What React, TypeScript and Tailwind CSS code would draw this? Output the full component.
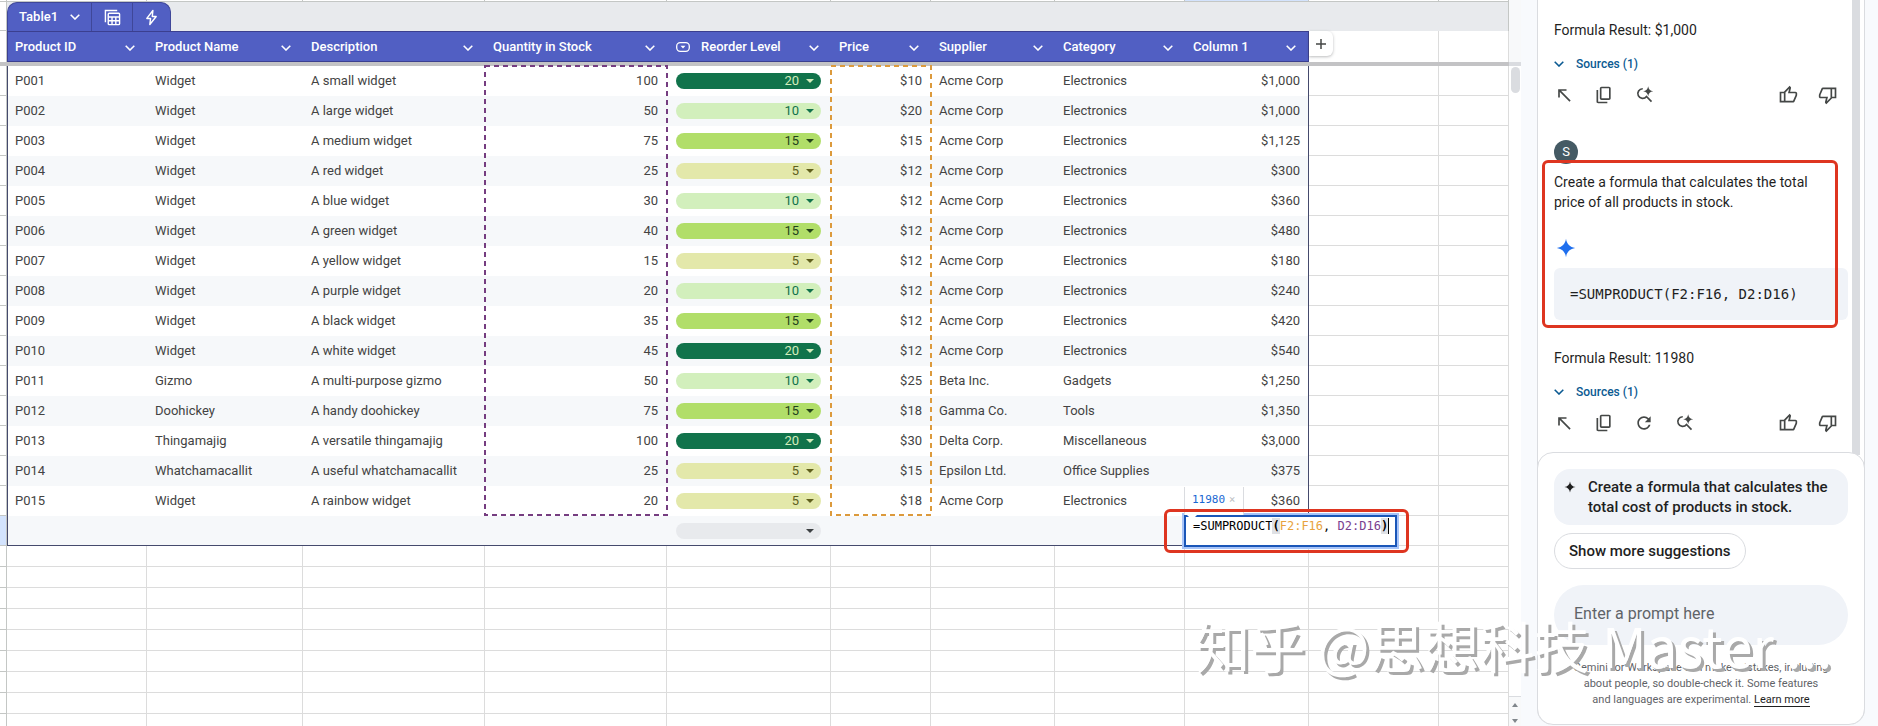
import type { ReactNode } from "react";
import clsx from "clsx";

type Row = {
  id: string;
  name: string;
  description: string;
  quantity: string;
  reorder: string;
  price: string;
  supplier: string;
  category: string;
  total: string;
};

const ROWS: Row[] = [
  { id: "P001", name: "Widget", description: "A small widget", quantity: "100", reorder: "20", price: "$10", supplier: "Acme Corp", category: "Electronics", total: "$1,000" },
  { id: "P002", name: "Widget", description: "A large widget", quantity: "50", reorder: "10", price: "$20", supplier: "Acme Corp", category: "Electronics", total: "$1,000" },
  { id: "P003", name: "Widget", description: "A medium widget", quantity: "75", reorder: "15", price: "$15", supplier: "Acme Corp", category: "Electronics", total: "$1,125" },
  { id: "P004", name: "Widget", description: "A red widget", quantity: "25", reorder: "5", price: "$12", supplier: "Acme Corp", category: "Electronics", total: "$300" },
  { id: "P005", name: "Widget", description: "A blue widget", quantity: "30", reorder: "10", price: "$12", supplier: "Acme Corp", category: "Electronics", total: "$360" },
  { id: "P006", name: "Widget", description: "A green widget", quantity: "40", reorder: "15", price: "$12", supplier: "Acme Corp", category: "Electronics", total: "$480" },
  { id: "P007", name: "Widget", description: "A yellow widget", quantity: "15", reorder: "5", price: "$12", supplier: "Acme Corp", category: "Electronics", total: "$180" },
  { id: "P008", name: "Widget", description: "A purple widget", quantity: "20", reorder: "10", price: "$12", supplier: "Acme Corp", category: "Electronics", total: "$240" },
  { id: "P009", name: "Widget", description: "A black widget", quantity: "35", reorder: "15", price: "$12", supplier: "Acme Corp", category: "Electronics", total: "$420" },
  { id: "P010", name: "Widget", description: "A white widget", quantity: "45", reorder: "20", price: "$12", supplier: "Acme Corp", category: "Electronics", total: "$540" },
  { id: "P011", name: "Gizmo", description: "A multi-purpose gizmo", quantity: "50", reorder: "10", price: "$25", supplier: "Beta Inc.", category: "Gadgets", total: "$1,250" },
  { id: "P012", name: "Doohickey", description: "A handy doohickey", quantity: "75", reorder: "15", price: "$18", supplier: "Gamma Co.", category: "Tools", total: "$1,350" },
  { id: "P013", name: "Thingamajig", description: "A versatile thingamajig", quantity: "100", reorder: "20", price: "$30", supplier: "Delta Corp.", category: "Miscellaneous", total: "$3,000" },
  { id: "P014", name: "Whatchamacallit", description: "A useful whatchamacallit", quantity: "25", reorder: "5", price: "$15", supplier: "Epsilon Ltd.", category: "Office Supplies", total: "$375" },
  { id: "P015", name: "Widget", description: "A rainbow widget", quantity: "20", reorder: "5", price: "$18", supplier: "Acme Corp", category: "Electronics", total: "$360" },
];

const COLUMNS = [
  "Product ID",
  "Product Name",
  "Description",
  "Quantity in Stock",
  "Reorder Level",
  "Price",
  "Supplier",
  "Category",
  "Column 1",
];

const EMPTY_ROWS = Array.from({ length: 12 }, (_, i) => i);
const GRID_COLUMNS = Array.from({ length: 11 }, (_, i) => i);

const MONO = "font-['DejaVu_Sans_Mono','Liberation_Mono',monospace]";

function chipColor(level: string) {
  if (level === "20") return "bg-[#11734b] text-[#d4edbc]";
  if (level === "15") return "bg-[#b1de69] text-[#23421a]";
  if (level === "10") return "bg-[#d2efbc] text-[#11734b]";
  if (level === "5") return "bg-[#e3e8aa] text-[#5f5f1c]";
  return "bg-[#e8eaed] text-[#3c4043]";
}

function Chevron() {
  return (
    <svg viewBox="0 0 10 6" className="h-[6px] w-[10px] shrink-0" fill="none" stroke="currentColor" strokeWidth="1.6">
      <path d="M.7.8 5 5 9.300.8" />
    </svg>
  );
}

function Sparkle({ className }: { className?: string }) {
  return (
    <svg viewBox="0 0 24 24" className={className} fill="currentColor">
      <path d="M12 1c1 6.400 4.600 10 11 11-6.400 1-10 4.600-11 11-1-6.400-4.600-10-11-11 6.400-1 10-4.600 11-11z" />
    </svg>
  );
}

function Marquee({ className }: { className: string }) {
  return (
    <svg className={clsx("pointer-events-none absolute -left-px -top-px z-10 h-[452px] overflow-visible", className)}>
      <rect x="1" y="1" width="calc(100% - 2px)" height="449" fill="none" stroke="currentColor" strokeWidth="2" strokeDasharray="5 4" />
    </svg>
  );
}

function LevelChip({ level, label }: { level: string; label: string }) {
  return (
    <span className={clsx("relative ml-[9px] mr-[10px] flex h-4 items-center rounded-full", chipColor(level))}>
      <select
        aria-label={label}
        defaultValue={level}
        className="h-4 w-full appearance-none rounded-full bg-transparent pr-[22px] text-[13px] leading-4 outline-none [text-align-last:right]"
      >
        {["", "5", "10", "15", "20"].map((option) => (
          <option key={option} value={option}>
            {option}
          </option>
        ))}
      </select>
      <svg viewBox="0 0 8 4" className="pointer-events-none absolute right-[7px] top-[6px] h-1 w-2" fill="currentColor">
        <path d="M0 0h8L4 4z" />
      </svg>
    </span>
  );
}

function FormulaEditor() {
  return (
    <div className="absolute -left-px -top-px z-20">
      <div className="pointer-events-none absolute -inset-y-[6px] -left-[20px] -right-[12px] z-10 rounded-md border-[3px] border-[#de3520]" />
      <div className="absolute bottom-full left-0 flex h-7 w-[60px] items-center gap-1 border-x border-[#dadce0] bg-white pb-[2px] pl-[7px]">
        <span className={clsx("text-[11px] leading-4 text-[#1967d2]", MONO)}>11980</span>
        <button aria-label="Close preview" className="text-[11px] leading-3 text-[#bdc1c6]">
          ×
        </button>
      </div>
      <div
        role="textbox"
        aria-label="Cell formula"
        contentEditable
        suppressContentEditableWarning
        className={clsx(
          "flex h-8 w-[213px] items-start whitespace-pre border-2 border-[#1a56b8] bg-white pl-[7px] pt-px text-[12px] leading-4 text-black outline-2 outline-[#a8c4f8]",
          MONO,
        )}
      >
        <span>=SUMPRODUCT</span>
        <span className="bg-[#dfe1e5] font-bold">(</span>
        <span className="text-[#e8a33d]">F2:F16</span>
        <span>, </span>
        <span className="text-[#7b3f8f]">D2:D16</span>
        <span className="border-r border-black bg-[#dfe1e5] font-bold">)</span>
      </div>
      <svg viewBox="0 0 12 6" className="absolute left-[2px] top-0 h-[5px] w-3">
        <path d="M0 0h12L6 6z" fill="#fff" />
      </svg>
    </div>
  );
}

function TableTab() {
  return (
    <div className="flex h-[29px] w-[164px] rounded-t-[10px] border-x border-t border-[#3f4799] bg-[#515fc3] text-white">
      <button className="flex w-[83px] items-center justify-between px-[11px] text-[13px] font-medium">
        Table1
        <Chevron />
      </button>
      <button aria-label="Table calculations" className="flex w-[41px] items-center justify-center border-l border-[#3f4799]">
        <svg viewBox="0 0 18 18" className="size-[17px]" fill="none" stroke="currentColor" strokeWidth="1.5">
          <path d="M1.500 14v-12.500h12.500" />
          <rect x="4.500" y="4.500" width="12" height="12" rx="1" />
          <path d="M4.500 8.500h12M4.500 12.500h12M8.500 8.500v8M12.500 8.500v8" />
        </svg>
      </button>
      <button aria-label="Quick actions" className="flex flex-1 items-center justify-center border-l border-[#3f4799]">
        <svg viewBox="0 0 16 18" className="h-[17px] w-[15px]" fill="none" stroke="currentColor" strokeWidth="1.5" strokeLinejoin="round">
          <path d="M9.500 1.500 3 10h4l-.8 6.500L13 8H8.800z" />
        </svg>
      </button>
    </div>
  );
}

function Sheet() {
  const edge = "border-b border-r border-[#c4c7c5] p-0";
  const grid = "border-b border-r border-[#dcdcdc] p-0";

  return (
    <div className="min-w-0 flex-1 overflow-hidden">
      <table className="w-full table-fixed border-separate border-spacing-0 text-left text-[13px] leading-4 text-[#434343]">
        <colgroup>
          <col className="w-[7px]" />
          <col className="w-[140px]" />
          <col className="w-[156px]" />
          <col className="w-[182px]" />
          <col className="w-[182px]" />
          <col className="w-[164px]" />
          <col className="w-[100px]" />
          <col className="w-[124px]" />
          <col className="w-[130px]" />
          <col className="w-[124px]" />
          <col className="w-[130px]" />
          <col />
        </colgroup>
        <thead>
          <tr className="h-[2px]">
            <td className={edge} />
            {GRID_COLUMNS.map((i) => (
              <td key={i} className={clsx(edge, i === 8 && "bg-[#d3e3fd]")} />
            ))}
          </tr>
          <tr className="h-[29px]">
            <td className={edge} />
            <td colSpan={11} className="border-r border-[#c4c7c5] bg-[#e8eaed] p-0">
              <TableTab />
            </td>
          </tr>
          <tr className="h-[31px]">
            <td className="border-r border-[#c4c7c5] p-0" />
            {COLUMNS.map((column, i) => (
              <th
                key={column}
                scope="col"
                className={clsx(
                  "border-y border-[#3b3f8f] bg-[#515fc3] p-0 font-medium text-white",
                  i === 0 && "border-l",
                  i === 8 && "border-r",
                )}
              >
                <div className={clsx("flex items-center pr-3", i === 0 ? "pl-[7px]" : "pl-2")}>
                  {i === 4 && (
                    <svg viewBox="0 0 14 10" className="ml-px mr-[11px] h-[10px] w-[14px]" fill="none" stroke="currentColor" strokeWidth="1.300">
                      <rect x=".7" y=".7" width="12.600" height="8.600" rx="3.500" />
                      <path d="M4.500 3.800h5L7 6.500z" fill="currentColor" stroke="none" />
                    </svg>
                  )}
                  <span className="flex-1 whitespace-nowrap">{column}</span>
                  <button aria-label={`${column} menu`} className="pt-[2px]">
                    <Chevron />
                  </button>
                </div>
              </th>
            ))}
            <td className="border-r border-[#dcdcdc] p-0 align-top">
              <button
                aria-label="Add column"
                className="flex h-[25px] w-6 items-center justify-center rounded-r-md bg-white shadow-[0_1px_3px_rgba(60,64,67,0.35)]"
              >
                <svg viewBox="0 0 10 10" className="size-[10px]" stroke="#444746" strokeWidth="1.500">
                  <path d="M5 0v10M0 5h10" />
                </svg>
              </button>
            </td>
            <td className="border-r border-[#dcdcdc] p-0" />
          </tr>
          <tr className="h-1">
            <td colSpan={12} className="bg-[#c3c3c5] p-0" />
          </tr>
        </thead>
        <tbody>
          {ROWS.map((row, i) => {
            const fill = i % 2 ? "bg-[#f6f8fa]" : "bg-white";
            return (
              <tr key={row.id} className="h-[30px]">
                <td className={edge} />
                <td className={clsx("border-l border-[#454a6d] py-0 pl-[7px]", fill)}>{row.id}</td>
                <td className={clsx("py-0 pl-2", fill)}>{row.name}</td>
                <td className={clsx("whitespace-nowrap py-0 pl-2", fill)}>{row.description}</td>
                <td className={clsx("relative py-0 pr-[9px] text-right", fill)}>
                  {row.quantity}
                  {i === 0 && <Marquee className="w-[184px] text-[#753d80]" />}
                </td>
                <td className={clsx("p-0", fill)}>
                  <LevelChip level={row.reorder} label={`Reorder level ${row.id}`} />
                </td>
                <td className={clsx("relative py-0 pr-[9px] text-right", fill)}>
                  {row.price}
                  {i === 0 && <Marquee className="w-[102px] text-[#dc9a3c]" />}
                </td>
                <td className={clsx("py-0 pl-2", fill)}>{row.supplier}</td>
                <td className={clsx("py-0 pl-2", fill)}>{row.category}</td>
                <td className={clsx("border-r border-[#454a6d] py-0 pr-2 text-right", fill)}>{row.total}</td>
                <td className={grid} />
                <td className={grid} />
              </tr>
            );
          })}
          <tr className="h-[30px]">
            <td className={clsx("bg-[#d3e3fd]", edge)} />
            {COLUMNS.map((column, i) => (
              <td
                key={column}
                className={clsx(
                  "relative border-b border-[#454a6d] bg-[#f6f8fa] p-0",
                  i === 0 && "border-l",
                  i === 8 && "border-r",
                )}
              >
                {i === 4 && <LevelChip level="" label="Reorder level" />}
                {i === 8 && <FormulaEditor />}
              </td>
            ))}
            <td className={grid} />
            <td className={grid} />
          </tr>
          {EMPTY_ROWS.map((i) => (
            <tr key={i} className="h-[21px]">
              <td className={edge} />
              {GRID_COLUMNS.map((j) => (
                <td key={j} className={grid} />
              ))}
            </tr>
          ))}
        </tbody>
      </table>
    </div>
  );
}

function SheetScrollbar() {
  return (
    <div className="flex w-3 shrink-0 flex-col bg-white">
      <div className="h-[62px] bg-[#f8f9fa]" />
      <div className="h-1 bg-[#dadce0]" />
      <div className="mx-auto mt-px h-[26px] w-[9px] rounded-full bg-[#dadce0]" />
      <div className="mt-auto flex flex-col items-center gap-3 border-t border-[#dadce0] bg-[#f8f9fa] pb-[3px] pt-[6px] text-[#80868b]">
        <svg viewBox="0 0 6 4" className="h-1 w-[6px]" fill="currentColor">
          <path d="M0 4h6L3 0z" />
        </svg>
        <svg viewBox="0 0 6 4" className="h-1 w-[6px]" fill="currentColor">
          <path d="M0 0h6L3 4z" />
        </svg>
      </div>
    </div>
  );
}

function IconButton({ label, viewBox = "0 0 24 24", className, children }: {
  label: string;
  viewBox?: string;
  className?: string;
  children: ReactNode;
}) {
  return (
    <button aria-label={label} className="flex h-8 w-10 items-center justify-center text-[#444746]">
      <svg viewBox={viewBox} className={clsx("size-5", className)} fill="currentColor">
        {children}
      </svg>
    </button>
  );
}

const THUMB =
  "M720-120H280v-520l280-280 50 50q7 7 11.500 19t4.500 23v14l-44 174h258q32 0 56 24t24 56v80q0 7-2 15t-4 15L794-168q-9 20-30 34t-44 14Zm-360-80h360l120-280v-80H480l54-220-174 174v406ZM280-640v80H160v360h120v80H80v-520h200Z";

function ResponseActions({ retry }: { retry?: boolean }) {
  return (
    <div className="-ml-[10px] mt-[5px] flex">
      <IconButton label="Insert">
        <path d="M5 15h2V8.410L18.590 20 20 18.590 8.410 7H15V5H5v10z" />
      </IconButton>
      <IconButton label="Copy" viewBox="0 -960 960 960">
        <path d="M360-240q-33 0-56.500-23.500T280-320v-480q0-33 23.500-56.500T360-880h360q33 0 56.500 23.500T800-800v480q0 33-23.500 56.500T720-240H360Zm0-80h360v-480H360v480ZM200-80q-33 0-56.500-23.500T120-160v-560h80v560h440v80H200Z" />
      </IconButton>
      {retry && (
        <IconButton label="Retry">
          <path d="M17.650 6.350C16.200 4.900 14.210 4 12 4c-4.420 0-7.990 3.580-7.990 8s3.570 8 7.990 8c3.730 0 6.840-2.550 7.730-6h-2.080c-.82 2.330-3.040 4-5.650 4-3.310 0-6-2.690-6-6s2.690-6 6-6c1.660 0 3.140.69 4.220 1.780L13 11h7V4l-2.350 2.350z" />
        </IconButton>
      )}
      <IconButton label="Check with search">
        <path d="M10.500 4.500A5.800 5.800 0 1 0 15 13.800L21 20" fill="none" stroke="currentColor" strokeWidth="2" />
        <path d="M17 1.500c.6 3.700 2.300 5.400 6 6-3.700.6-5.400 2.300-6 6-.6-3.700-2.300-5.400-6-6 3.700-.6 5.400-2.300 6-6z" />
      </IconButton>
      <div className="ml-auto flex">
        <IconButton label="Good response" viewBox="0 -960 960 960">
          <path d={THUMB} />
        </IconButton>
        <IconButton label="Bad response" viewBox="0 -960 960 960" className="rotate-180">
          <path d={THUMB} />
        </IconButton>
      </div>
    </div>
  );
}

function Response({ result, retry }: { result: string; retry?: boolean }) {
  return (
    <>
      <p className="text-[14px] leading-5">Formula Result: {result}</p>
      <button className="mt-[14px] flex h-5 items-center gap-3 text-[12px] font-medium text-[#0b5a92]">
        <Chevron />
        Sources (1)
      </button>
      <ResponseActions retry={retry} />
    </>
  );
}

function GeminiPanel() {
  return (
    <aside className="mb-px ml-4 mr-[13px] flex w-[328px] shrink-0 flex-col rounded-b-2xl border-x border-[#dadce0] bg-white text-[#1f1f1f]">
      <div className="flex min-h-0 flex-1 bg-white">
        <div className="flex min-w-0 flex-1 flex-col overflow-hidden pl-4 pr-1 pt-5">
          <Response result="$1,000" />
          <div className="mt-[29px] flex size-6 shrink-0 items-center justify-center rounded-full bg-[#455a64] text-[13px] text-white">S</div>
          <div className="relative">
            <p className="mt-2 text-[14px] leading-5">
              Create a formula that calculates the total
              <br />
              price of all products in stock.
            </p>
            <Sparkle className="ml-[2px] mt-[26px] size-5 text-[#1f6fee]" />
            <pre className={clsx("mt-[10px] rounded-md bg-[#f0f3f8] p-4 text-[14px] leading-5", MONO)}>
              =SUMPRODUCT(F2:F16, D2:D16)
            </pre>
            <div className="pointer-events-none absolute -bottom-2 -left-3 -top-1 right-[10px] rounded-md border-[3px] border-[#de3520]" />
          </div>
          <div className="mt-7 flex flex-col">
            <Response result="11980" retry />
          </div>
        </div>
        <div className="mr-1 w-2 bg-[#dadce0]" />
      </div>

      <div className="-mx-px -mt-[3px] rounded-2xl border border-[#dadce0] bg-white p-4">
        <button className="flex w-full gap-3 rounded-2xl bg-[#f0f3f8] py-2 pl-[10px] text-left text-[15px] font-medium leading-5">
          <Sparkle className="mt-1 size-3 shrink-0" />
          <span>
            Create a formula that calculates the
            <br />
            total cost of products in stock.
          </span>
        </button>
        <button className="mt-2 h-9 rounded-full border border-[#dadce0] px-[14px] text-[15px] font-medium">
          Show more suggestions
        </button>
        <input
          aria-label="Prompt"
          placeholder="Enter a prompt here"
          className="mt-4 block h-[60px] w-full rounded-full bg-[#f0f3f8] px-5 pb-1 text-[16px] outline-none placeholder:text-[#5f6368]"
        />
        <p className="mt-[15px] text-center text-[11px] leading-4 text-[#5f6368]">
          Gemini for Workspace can make mistakes, including
          <br />
          about people, so double-check it. Some features
          <br />
          and languages are experimental.{" "}
          <a href="#" className="border-b border-[#1f1f1f] text-[#1f1f1f]">
            Learn more
          </a>
        </p>
      </div>
    </aside>
  );
}

export default function App() {
  return (
    <main className="relative flex h-screen overflow-hidden bg-[#f8fafd] font-['Roboto','Liberation_Sans',sans-serif]">
      <div className="flex min-w-0 flex-1 bg-white">
        <Sheet />
        <SheetScrollbar />
      </div>
      <GeminiPanel />
      <div className="pointer-events-none absolute bottom-11 right-[46px] z-30 whitespace-pre font-['Noto_Sans_CJK_SC',sans-serif] text-[55px] leading-[76px] text-white [text-shadow:3px_3px_0_#a9a9a9]">
        知乎 @思想科技 Master ...
      </div>
    </main>
  );
}
